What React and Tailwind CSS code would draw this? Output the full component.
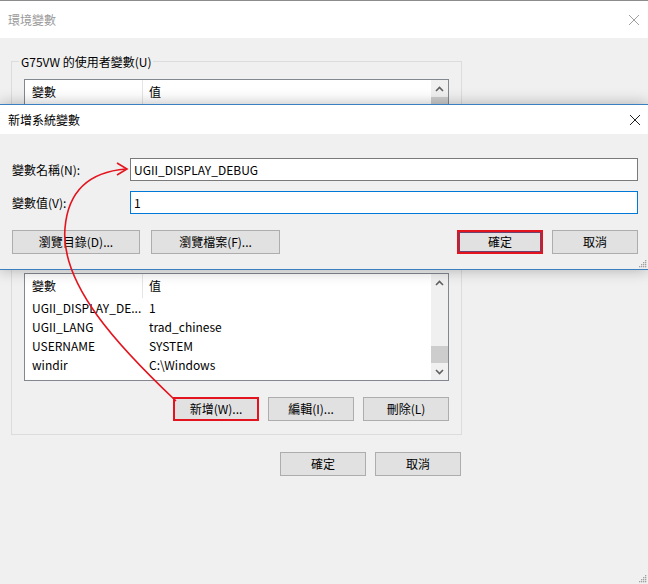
import React from 'react';

const font = "font-['Noto_Sans_CJK_TC','Noto_Sans',sans-serif]";

const Btn = ({ children, w = 'w-[86px]', red, inner }) => (
  <div
    className={`${w} h-[24px] flex items-center justify-center bg-[#e1e1e1] text-[12px] text-black ${
      red ? 'border-2 border-[#e3141e]' : 'border border-[#adadad]'
    } ${inner ? 'shadow-[inset_0_0_0_1px_#6b4270]' : ''}`}
  >
    {children}
  </div>
);

const Chevron = ({ up }) => (
  <svg width="9" height="6" viewBox="0 0 9 6" className="text-[#606060]">
    <path d={up ? 'M1 5 L4.5 1.5 L8 5' : 'M1 1 L4.5 4.5 L8 1'} fill="none" stroke="currentColor" strokeWidth="1.6" />
  </svg>
);

const Grip = () => (
  <svg width="8" height="8" viewBox="0 0 8 8">
    {[[6, 0], [4, 2], [6, 2], [2, 4], [4, 4], [6, 4], [0, 6], [2, 6], [4, 6], [6, 6]].map(([x, y], i) => (
      <rect key={i} x={x} y={y} width="1.3" height="1.3" fill="#a0a0a0" />
    ))}
  </svg>
);

const ListBox = ({ rows, h, thumb }) => (
  <div className={`w-[425px] ${h} border border-[#828790] bg-white flex`}>
    <div className="flex-1 flex flex-col">
      <div className="h-[24px] flex items-center text-[12px]">
        <div className="w-[118px] h-full pl-[7px] flex items-center border-r border-[#e5e5e5]">變數</div>
        <div className="pl-[6px]">值</div>
      </div>
      {rows.map(([k, v]) => (
        <div key={k} className="h-[19px] flex items-center text-[12px]">
          <div className="w-[118px] pl-[7px] whitespace-nowrap overflow-hidden">{k}</div>
          <div className="pl-[6px]">{v}</div>
        </div>
      ))}
    </div>
    <div className="w-[17px] bg-[#f0f0f0] flex flex-col items-center">
      <div className="h-[17px] flex items-center justify-center">
        <Chevron up />
      </div>
      <div className="flex-1 w-full flex flex-col">
        <div className={thumb} />
        <div className="w-full h-[17px] bg-[#cdcdcd]" />
      </div>
      <div className="h-[17px] flex items-center justify-center">
        <Chevron />
      </div>
    </div>
  </div>
);

const GroupBox = ({ title, children, className }) => (
  <fieldset className={`w-[451px] border border-[#dcdcdc] pl-[12px] pr-[12px] ${className}`}>
    {title && <legend className="ml-[-5px] px-[2px] text-[12px] text-black leading-[17px]">{title}</legend>}
    {children}
  </fieldset>
);

export default function App() {
  return (
    <div className={`w-[648px] h-[584px] relative overflow-hidden bg-[#f0f0f0] ${font} text-black`}>
      {/* background window title bar */}
      <div className="h-[38px] bg-white border-t border-[#8c8c8c] flex items-center justify-between pl-[8px] pr-[8px]">
        <span className="text-[12px] text-[#9a9a9a]">環境變數</span>
        <svg width="12" height="12" viewBox="0 0 12 12">
          <path d="M1 1 L11 11 M11 1 L1 11" stroke="#a0a0a0" strokeWidth="1" />
        </svg>
      </div>

      <div className="pl-[11px] pt-[15px] flex flex-col">
        <GroupBox title="G75VW 的使用者變數(U)" className="h-[190px]">
          <div className="mt-[9px]">
            <ListBox rows={[]} h="h-[110px]" thumb="h-[0px]" />
          </div>
        </GroupBox>

        {/* system variables group, its caption sits under the dialog */}
        <GroupBox className="mt-[23px] pb-[13px]">
          <div className="mt-[6px]">
            <ListBox
              rows={[
                ['UGII_DISPLAY_DE...', '1'],
                ['UGII_LANG', 'trad_chinese'],
                ['USERNAME', 'SYSTEM'],
                ['windir', 'C:\\Windows'],
              ]}
              h="h-[108px]"
              thumb="h-[55px]"
            />
          </div>
          <div className="mt-[16px] w-[425px] flex justify-end gap-[9px]">
            <Btn red>新增(W)...</Btn>
            <Btn>編輯(I)...</Btn>
            <Btn>刪除(L)</Btn>
          </div>
        </GroupBox>

        <div className="mt-[17px] w-[450px] flex justify-end gap-[9px]">
          <Btn>確定</Btn>
          <Btn>取消</Btn>
        </div>
      </div>

      <div className="absolute right-[1px] bottom-[1px]">
        <Grip />
      </div>

      {/* foreground dialog */}
      <div className="absolute left-0 right-0 top-[104px] h-[166px] border-y border-[#3c7fc1] bg-[#f0f0f0] shadow-[0_0_14px_rgba(0,0,0,0.28)] flex flex-col">
        <div className="h-[29px] bg-white flex items-center justify-between pl-[8px] pr-[7px]">
          <span className="text-[12px]">新增系統變數</span>
          <svg width="12" height="12" viewBox="0 0 12 12">
            <path d="M1 1 L11 11 M11 1 L1 11" stroke="#222" strokeWidth="1" />
          </svg>
        </div>
        <div className="flex-1 relative pl-[12px] pr-[10px] pt-[24px] flex flex-col">
          <div className="flex items-center">
            <span className="w-[118px] shrink-0 text-[12px]">變數名稱(N):</span>
            <div className="w-[508px] h-[23px] border border-[#7a7a7a] bg-white flex items-center pl-[3px] text-[12px]">
              UGII_DISPLAY_DEBUG
            </div>
          </div>
          <div className="flex items-center mt-[10px]">
            <span className="w-[118px] shrink-0 text-[12px]">變數值(V):</span>
            <div className="w-[508px] h-[23px] border border-[#0078d7] bg-white flex items-center pl-[3px] text-[12px]">
              1
            </div>
          </div>
          <div className="flex mt-[16px]">
            <Btn w="w-[128px]">瀏覽目錄(D)...</Btn>
            <div className="ml-[11px]">
              <Btn w="w-[129px]">瀏覽檔案(F)...</Btn>
            </div>
            <div className="ml-auto flex gap-[9px]">
              <Btn w="w-[86px]" red inner>確定</Btn>
              <Btn w="w-[86px]">取消</Btn>
            </div>
          </div>
          <div className="absolute right-[1px] bottom-[1px]">
            <Grip />
          </div>
        </div>
      </div>

      {/* red annotation arrow */}
      <svg className="absolute inset-0 pointer-events-none" width="648" height="584" viewBox="0 0 648 584">
        <path
          d="M176 401 C120 348, 60 285, 65 228 C68 192, 88 172, 126 169"
          fill="none"
          stroke="#e3141e"
          strokeWidth="1.6"
        />
        <path d="M117 163 L127 169 L117 175" fill="none" stroke="#e3141e" strokeWidth="1.6" />
      </svg>
    </div>
  );
}
